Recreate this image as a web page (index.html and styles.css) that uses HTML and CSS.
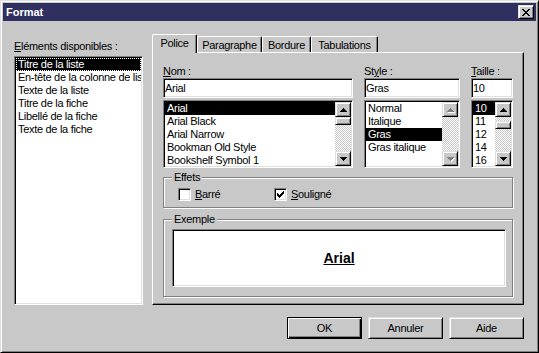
FILE: index.html
```html
<!DOCTYPE html>
<html lang="fr">
<head>
    <meta charset="UTF-8">
    <meta name="viewport" content="width=device-width, initial-scale=1.0">
    <title>Format</title>
    <link rel="stylesheet" href="styles.css">
</head>
<body>
    <div class="window">
        <!-- Title bar -->
        <div class="titlebar">
            <span class="title">Format</span>
            <button type="button" class="close raised" aria-label="Fermer">
                <svg width="8" height="7" viewBox="0 0 8 7"><path d="M0 0h2v1H0zM6 0h2v1H6zM1 1h2v1H1zM5 1h2v1H5zM2 2h4v1H2zM3 3h2v1H3zM2 4h4v1H2zM1 5h2v1H1zM5 5h2v1H5zM0 6h2v1H0zM6 6h2v1H6z"/></svg>
            </button>
        </div>

        <div class="content">
            <div class="main">
                <!-- Available elements -->
                <div class="left">
                    <div class="field-label"><u>E</u>léments disponibles :</div>
                    <div class="listbox sunken tall">
                        <div class="items">
                            <div class="item selected focus">Titre de la liste</div>
                            <div class="item">En-tête de la colonne de liste</div>
                            <div class="item">Texte de la liste</div>
                            <div class="item">Titre de la fiche</div>
                            <div class="item">Libellé de la fiche</div>
                            <div class="item">Texte de la fiche</div>
                        </div>
                    </div>
                </div>

                <!-- Tabs -->
                <div class="right">
                    <div class="tabs">
                        <div class="tab active tab-police">Police</div>
                        <div class="tab tab-para">Paragraphe</div>
                        <div class="tab tab-border">Bordure</div>
                        <div class="tab tab-tabs">Tabulations</div>
                    </div>

                    <div class="panel">
                        <div class="fields">
                            <div class="col col-name">
                                <div class="field-label"><u>N</u>om :</div>
                                <div class="textbox sunken">Arial</div>
                                <div class="listbox sunken">
                                    <div class="items">
                                        <div class="item selected">Arial</div>
                                        <div class="item">Arial Black</div>
                                        <div class="item">Arial Narrow</div>
                                        <div class="item">Bookman Old Style</div>
                                        <div class="item">Bookshelf Symbol 1</div>
                                    </div>
                                    <div class="scrollbar">
                                        <div class="sb-btn raised">
                                            <svg width="7" height="4" viewBox="0 0 7 4"><path d="M3 0h1v1h1v1h1v1h1v1H0V3h1V2h1V1h1z"/></svg>
                                        </div>
                                        <div class="sb-track"><div class="sb-thumb raised"></div></div>
                                        <div class="sb-btn raised">
                                            <svg width="7" height="4" viewBox="0 0 7 4"><path d="M0 0h7v1H6v1H5v1H4v1H3V3H2V2H1V1H0z"/></svg>
                                        </div>
                                    </div>
                                </div>
                            </div>

                            <div class="col col-style">
                                <div class="field-label">St<u>y</u>le :</div>
                                <div class="textbox sunken">Gras</div>
                                <div class="listbox sunken">
                                    <div class="items">
                                        <div class="item">Normal</div>
                                        <div class="item">Italique</div>
                                        <div class="item selected">Gras</div>
                                        <div class="item">Gras italique</div>
                                    </div>
                                    <div class="scrollbar">
                                        <div class="sb-btn raised disabled">
                                            <svg width="7" height="4" viewBox="0 0 7 4"><path d="M3 0h1v1h1v1h1v1h1v1H0V3h1V2h1V1h1z"/></svg>
                                        </div>
                                        <div class="sb-track"></div>
                                        <div class="sb-btn raised disabled">
                                            <svg width="7" height="4" viewBox="0 0 7 4"><path d="M0 0h7v1H6v1H5v1H4v1H3V3H2V2H1V1H0z"/></svg>
                                        </div>
                                    </div>
                                </div>
                            </div>

                            <div class="col col-size">
                                <div class="field-label"><u>T</u>aille :</div>
                                <div class="textbox sunken">10</div>
                                <div class="listbox sunken">
                                    <div class="items">
                                        <div class="item selected">10</div>
                                        <div class="item">11</div>
                                        <div class="item">12</div>
                                        <div class="item">14</div>
                                        <div class="item">16</div>
                                    </div>
                                    <div class="scrollbar">
                                        <div class="sb-btn raised">
                                            <svg width="7" height="4" viewBox="0 0 7 4"><path d="M3 0h1v1h1v1h1v1h1v1H0V3h1V2h1V1h1z"/></svg>
                                        </div>
                                        <div class="sb-track"><div class="sb-thumb raised thumb-low"></div></div>
                                        <div class="sb-btn raised">
                                            <svg width="7" height="4" viewBox="0 0 7 4"><path d="M0 0h7v1H6v1H5v1H4v1H3V3H2V2H1V1H0z"/></svg>
                                        </div>
                                    </div>
                                </div>
                            </div>
                        </div>

                        <!-- Effects -->
                        <div class="group effects">
                            <span class="group-title">Effets</span>
                            <div class="checks">
                                <label class="check">
                                    <span class="checkbox sunken"></span>
                                    <span><u>B</u>arré</span>
                                </label>
                                <label class="check">
                                    <span class="checkbox sunken">
                                        <svg width="7" height="7" viewBox="0 0 7 7"><path d="M6 0h1v1H6zM5 1h2v1H5zM0 2h1v1H0zM4 2h3v1H4zM0 3h2v1H0zM3 3h3v1H3zM0 4h5v1H0zM1 5h3v1H1zM2 6h1v1H2z"/></svg>
                                    </span>
                                    <span><u>S</u>ouligné</span>
                                </label>
                            </div>
                        </div>

                        <!-- Preview -->
                        <div class="group sample-group">
                            <span class="group-title">Exemple</span>
                            <div class="preview sunken"><span class="sample">Arial</span></div>
                        </div>
                    </div>
                </div>
            </div>

            <div class="actions">
                <button type="button" class="btn default">OK</button>
                <button type="button" class="btn raised">Annuler</button>
                <button type="button" class="btn raised">Aide</button>
            </div>
        </div>
    </div>
</body>
</html>
```

FILE: styles.css
```css
/* Classic dialog look */
body {
    margin: 0;
    background: #c8c8c8;
    font-family: "Liberation Sans", Arial, sans-serif;
    font-size: 11px;
    letter-spacing: -0.3px;
    color: #000;
}

.window {
    width: 539px;
    height: 353px;
    box-sizing: border-box;
    border: 1px solid;
    border-color: #dfdfdf #000 #000 #dfdfdf;
    box-shadow: inset 1px 1px #fff, inset -1px -1px #808080;
    padding: 2px;
}

/* Bevels */
.raised {
    box-sizing: border-box;
    background: #c8c8c8;
    border: 1px solid;
    border-color: #dfdfdf #000 #000 #dfdfdf;
    box-shadow: inset 1px 1px #fff, inset -1px -1px #808080;
}

.sunken {
    box-sizing: border-box;
    background: #fff;
    border: 1px solid;
    border-color: #808080 #fff #fff #808080;
    box-shadow: inset 1px 1px #000, inset -1px -1px #dfdfdf;
}

/* Title bar */
.titlebar {
    height: 18px;
    background: #303060;
    color: #fff;
    display: flex;
    align-items: center;
    justify-content: space-between;
    padding-left: 3px;
}

.title {
    font-weight: bold;
    letter-spacing: 0;
}

.close {
    width: 16px;
    height: 14px;
    margin-right: 2px;
    padding: 0;
    display: flex;
    align-items: center;
    justify-content: center;
}

.close svg {
    fill: #000;
}

.content {
    padding: 13px 12px 0 11px;
}

.main {
    display: flex;
    gap: 9px;
}

.left {
    width: 129px;
}

.field-label {
    line-height: 13px;
    white-space: nowrap;
}

.left .field-label {
    margin-top: 6px;
    margin-bottom: 3px;
}

/* List boxes */
.listbox {
    margin-top: 2px;
    height: 68px;
    padding: 1px 1px 0;
    display: flex;
    overflow: hidden;
}

.listbox.tall {
    margin-top: 0;
    height: 249px;
}

.items {
    flex: 1;
    min-width: 0;
    overflow: hidden;
}

.item {
    height: 13px;
    line-height: 13px;
    padding: 0 2px;
    white-space: nowrap;
}

.item.selected {
    background: #000;
    color: #fff;
}

.item.focus {
    outline: 1px dotted #fff;
    outline-offset: -1px;
}

/* Scroll bars */
.scrollbar {
    width: 16px;
    height: 64px;
    display: flex;
    flex-direction: column;
}

.sb-btn {
    height: 15px;
    display: flex;
    align-items: center;
    justify-content: center;
}

.sb-btn svg {
    fill: #000;
}

.sb-btn.disabled svg {
    fill: #808080;
    filter: drop-shadow(1px 1px 0 #fff);
}

.sb-track {
    flex: 1;
    background: repeating-conic-gradient(#fff 0 25%, #c8c8c8 0 50%) 0 0 / 2px 2px;
}

.sb-thumb {
    height: 8px;
}

.thumb-low {
    margin-top: 4px;
}

/* Tabs */
.right {
    width: 372px;
}

.tabs {
    display: flex;
    align-items: flex-end;
    height: 18px;
    position: relative;
    z-index: 1;
}

.tab {
    height: 16px;
    box-sizing: border-box;
    border-top: 1px solid #fff;
    border-left: 1px solid #fff;
    border-right: 1px solid #000;
    border-radius: 2px 2px 0 0;
    box-shadow: inset -1px 0 #808080;
    padding-top: 2px;
    line-height: 13px;
    text-align: center;
    background: #c8c8c8;
}

.tab.active {
    height: 19px;
    margin-bottom: -1px;
}

.tab-police { width: 45px; }
.tab-para { width: 65px; }
.tab-border { width: 49px; }
.tab-tabs { width: 67px; }

.panel {
    height: 253px;
    box-sizing: border-box;
    border: 1px solid;
    border-color: #fff #000 #000 #fff;
    box-shadow: inset -1px -1px #808080;
    padding: 12px 10px 0 10px;
}

.fields {
    display: flex;
    gap: 11px;
}

.col-name { width: 190px; }
.col-style { width: 96px; }
.col-size { width: 42px; }

.textbox {
    height: 20px;
    line-height: 18px;
    padding-left: 1px;
    white-space: nowrap;
}

/* Group boxes */
.group {
    position: relative;
    border: 1px solid #808080;
    box-shadow: 1px 1px 0 #fff, inset 1px 1px 0 #fff;
}

.group-title {
    position: absolute;
    top: -7px;
    left: 8px;
    padding: 0 2px;
    line-height: 13px;
    background: #c8c8c8;
}

.effects {
    margin-top: 9px;
    padding: 10px 14px 6px;
}

.checks {
    display: flex;
}

.check {
    width: 96px;
    display: flex;
    align-items: center;
    gap: 4px;
    line-height: 13px;
}

.checkbox {
    width: 13px;
    height: 13px;
    display: flex;
    align-items: center;
    justify-content: center;
}

.sample-group {
    margin-top: 11px;
    padding: 9px 6px 9px 8px;
}

.preview {
    height: 58px;
    display: flex;
    align-items: center;
    justify-content: center;
}

.sample {
    font-size: 14px;
    font-weight: bold;
    letter-spacing: 0;
    text-decoration: underline;
}

/* Bottom buttons */
.actions {
    display: flex;
    justify-content: flex-end;
    gap: 6px;
    margin-top: 12px;
}

.btn {
    width: 75px;
    height: 22px;
    padding: 0;
    font-family: inherit;
    font-size: 11px;
    letter-spacing: -0.3px;
    color: #000;
}

.btn.default {
    box-sizing: border-box;
    background: #c8c8c8;
    border: 1px solid #000;
    box-shadow: inset 1px 1px #fff, inset -1px -1px #000, inset -2px -2px #808080;
}
```
